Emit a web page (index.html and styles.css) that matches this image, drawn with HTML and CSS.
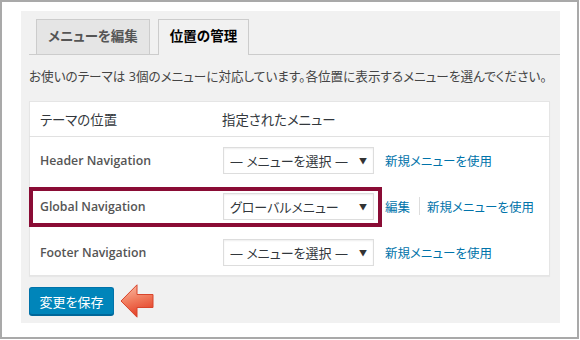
FILE: index.html
```html
<!DOCTYPE html>
<html lang="ja">
<head>
  <meta charset="UTF-8">
  <title>メニュー - 位置の管理</title>
  <link rel="stylesheet" href="styles.css">
</head>
<body>
  <div class="frame">
    <div class="panel">
      <div class="tabs">
        <a class="tab" href="#">メニューを編集</a>
        <a class="tab active" href="#">位置の管理</a>
      </div>
      <div class="content">
        <p class="desc">お使いのテーマは 3個のメニューに対応しています。各位置に表示するメニューを選んでください。</p>
        <table class="locations">
          <thead>
            <tr>
              <th class="col-name">テーマの位置</th>
              <th>指定されたメニュー</th>
            </tr>
          </thead>
          <tbody>
            <tr>
              <td class="col-name">Header Navigation</td>
              <td>
                <div class="menu-cell">
                  <div class="select"><span>— メニューを選択 —</span><span class="caret">▼</span></div>
                  <a href="#">新規メニューを使用</a>
                </div>
              </td>
            </tr>
            <tr class="marked">
              <td class="col-name">Global Navigation<span class="mark"></span></td>
              <td>
                <div class="menu-cell">
                  <div class="select"><span>グローバルメニュー</span><span class="caret">▼</span></div>
                  <a href="#">編集</a>
                  <span class="sep"></span>
                  <a href="#">新規メニューを使用</a>
                </div>
              </td>
            </tr>
            <tr>
              <td class="col-name">Footer Navigation</td>
              <td>
                <div class="menu-cell">
                  <div class="select"><span>— メニューを選択 —</span><span class="caret">▼</span></div>
                  <a href="#">新規メニューを使用</a>
                </div>
              </td>
            </tr>
          </tbody>
        </table>
        <div class="actions">
          <button type="button" class="save">変更を保存</button>
          <svg class="arrow" width="34" height="34" viewBox="0 0 34 34">
            <defs>
              <linearGradient id="arrowFill" x1="0" y1="0" x2="0.3" y2="1">
                <stop offset="0" stop-color="#fbc3ad"/>
                <stop offset="0.55" stop-color="#f07a5c"/>
                <stop offset="1" stop-color="#e4432a"/>
              </linearGradient>
            </defs>
            <path d="M1 17 L17 0.8 L17 10.5 L33 10.5 L33 23.5 L17 23.5 L17 33.2 Z" fill="url(#arrowFill)" stroke="#d8452c" stroke-width="1"/>
          </svg>
        </div>
      </div>
    </div>
  </div>
</body>
</html>
```

FILE: styles.css
```css
body {
  margin: 0;
  background: #fff;
  font-family: "Open Sans", "Noto Sans CJK JP", sans-serif;
  color: #444;
}

.frame {
  width: 579px;
  height: 339px;
  box-sizing: border-box;
  border: 2px solid #a9a9a9;
  padding: 9px 0 0 19px;
}

.panel {
  width: 539px;
  height: 312px;
  background: #f1f1f1;
  padding: 8px 0 0 8px;
  box-sizing: border-box;
}

.tabs {
  display: flex;
  gap: 8px;
  padding-left: 7px;
  border-bottom: 1px solid #ccc;
  height: 35px;
}

.tab {
  display: block;
  height: 35px;
  box-sizing: border-box;
  padding: 0 11px;
  line-height: 33px;
  border: 1px solid #ccc;
  border-bottom: none;
  background: #e5e5e5;
  color: #555;
  font-size: 13.5px;
  font-weight: bold;
  text-decoration: none;
  font-feature-settings: "palt";
}

.tab.active {
  background: #f1f1f1;
  color: #000;
  height: 36px;
}

.content {
  margin-right: 10px;
}

.desc {
  margin: 13px 0 15px;
  font-size: 12.6px;
  line-height: 18px;
  color: #444;
  white-space: nowrap;
  font-feature-settings: "palt";
}

.locations {
  width: 100%;
  border-collapse: collapse;
  background: #fff;
  border: 1px solid #e5e5e5;
  box-shadow: 0 1px 1px rgba(0,0,0,0.04);
}

.locations th {
  height: 34px;
  padding: 0 10px 0 0;
  text-align: left;
  font-weight: normal;
  font-size: 13.4px;
  color: #32373c;
  border-bottom: 1px solid #e1e1e1;
  font-feature-settings: "palt";
}

.locations th.col-name,
.locations td.col-name {
  width: 172px;
  padding-left: 10px;
}

.locations td {
  height: 46px;
  padding: 0;
  vertical-align: middle;
}

.locations td.col-name {
  font-size: 12.3px;
  font-weight: 600;
  color: #555;
  position: relative;
}

.menu-cell {
  display: flex;
  align-items: center;
  font-size: 13px;
  font-feature-settings: "palt";
}

.select {
  width: 151px;
  height: 27px;
  box-sizing: border-box;
  margin-left: 1px;
  margin-right: 11px;
  border: 1px solid #ddd;
  box-shadow: inset 0 1px 2px rgba(0,0,0,0.07);
  display: flex;
  align-items: center;
  justify-content: space-between;
  padding: 0 6px 0 6px;
  color: #32373c;
}

.caret {
  font-size: 8px;
  color: #333;
}

.menu-cell a {
  color: #0073aa;
  text-decoration: none;
  font-size: 12.5px;
}

.sep {
  width: 1px;
  height: 18px;
  background: #ddd;
  margin: 0 7px 0 9px;
}

.mark {
  position: absolute;
  left: -1px;
  top: 4px;
  width: 353px;
  height: 40px;
  box-sizing: border-box;
  border: 4px solid #8a0c35;
}

.actions {
  display: flex;
  align-items: center;
  gap: 6px;
  margin-top: 8px;
}

.save {
  width: 85px;
  height: 28px;
  padding: 0;
  background: #0085ba;
  border: 1px solid #0073aa;
  border-bottom-color: #006799;
  border-radius: 3px;
  box-shadow: 0 1px 0 #006799;
  color: #fff;
  font-family: "Open Sans", "Noto Sans CJK JP", sans-serif;
  font-size: 13px;
  font-feature-settings: "palt";
}
```
